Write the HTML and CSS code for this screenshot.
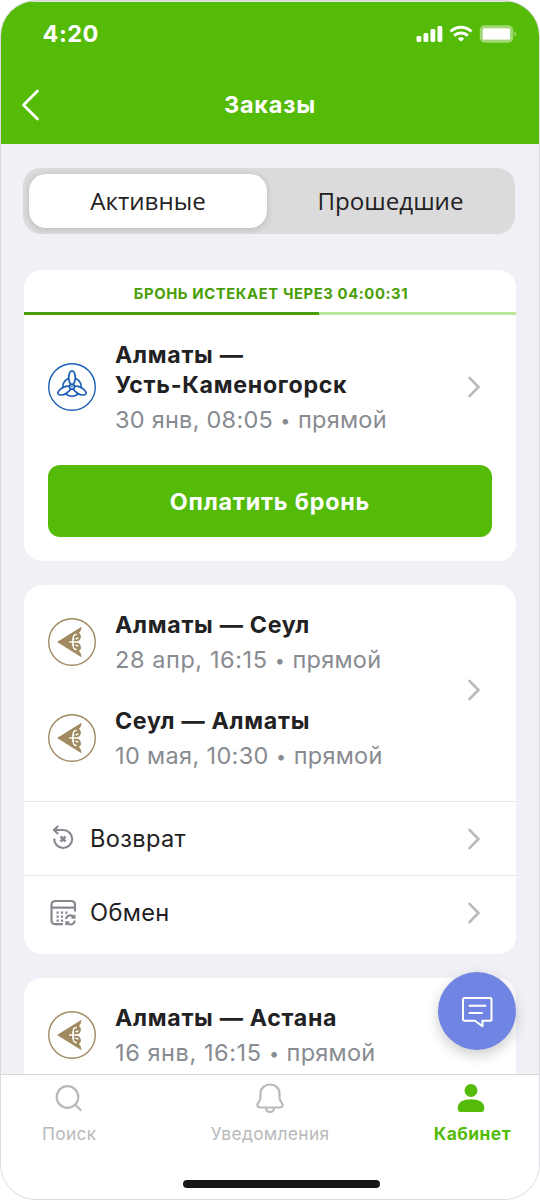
FILE: index.html
```html
<!DOCTYPE html>
<html lang="ru">
<head>
<meta charset="utf-8">
<title>Заказы</title>
<link rel="stylesheet" href="styles.css">
</head>
<body>
<svg width="0" height="0" class="defs" aria-hidden="true">
  <symbol id="chevron" viewBox="0 0 14 24"><path d="M2.500 2.800 11.500 12l-9 9.200" fill="none" stroke="#b9b9b9" stroke-width="2.600" stroke-linecap="round" stroke-linejoin="miter"/></symbol>
  <symbol id="airline-gold" viewBox="0 0 48 48">
    <circle cx="24" cy="24" r="23.300" fill="#fff" stroke="#a08a62" stroke-width="1.400"/>
    <path d="M9 24 33.500 8.800c-.2 3-1 4.800-2.600 6.200 1.800 1 2.400 3 1.800 5-.7 2.200-2.300 3.300-4.400 4 2.100.7 3.700 1.800 4.400 4 .6 2 0 4-1.800 5 1.600 1.400 2.400 3.200 2.600 6.200z" fill="#a08a62"/>
    <path d="M21.200 24h11M24.800 20.500v7M26 22c-2-3 .2-6 2.800-5.400M26 26c-2 3 .2 6 2.800 5.400M27.800 19.800c.2 1.400 2.200 1.200 2-.5M27.800 28.200c.2-1.400 2.200-1.200 2 .5" fill="none" stroke="#fff" stroke-width="1.400"/>
  </symbol>
</svg>
<div class="phone">
  <header class="header">
    <div class="status">
      <span class="time">4:20</span>
      <svg class="status-icons" width="102" height="20" viewBox="0 0 102 20">
        <g fill="#fff">
          <rect x="1.500" y="12" width="4.800" height="6" rx="1.400"/><rect x="8.500" y="9" width="4.800" height="9" rx="1.400"/><rect x="15.500" y="5" width="4.800" height="13" rx="1.400"/><rect x="22.500" y="2" width="4.800" height="16" rx="1.400"/>
          <path d="m46 17.800-3.200-3.300c1.900-1.600 4.500-1.600 6.400 0z"/>
          <rect x="67.700" y="4.300" width="27.500" height="11.400" rx="1.500"/>
        </g>
        <g fill="none" stroke="#fff" stroke-width="3"><path d="M35.500 7.500c5.900-5.700 15.100-5.700 21 0M39.200 11.800c3.800-3.700 9.800-3.700 13.600 0"/></g>
        <rect x="66.300" y="2.800" width="30.400" height="14.400" rx="3.500" fill="none" stroke="#fff" stroke-opacity=".45" stroke-width="3"/>
        <path d="M99.500 7.500c2 .8 2 4.200 0 5z" fill="#fff" opacity=".5"/>
      </svg>
    </div>
    <div class="nav">
      <svg class="back" width="20" height="34" viewBox="0 0 20 34"><path d="M17.500 3 3.500 17l14 14" fill="none" stroke="#fff" stroke-width="2.800" stroke-linecap="round" stroke-linejoin="round"/></svg>
      <h1 class="heading">Заказы</h1>
    </div>
  </header>

  <main class="content">
    <div class="tabs">
      <div class="tab tab-active"><span>Активные</span></div>
      <div class="tab"><span>Прошедшие</span></div>
    </div>

    <section class="card booking">
      <div class="expiry">БРОНЬ ИСТЕКАЕТ ЧЕРЕЗ 04:00:31</div>
      <div class="progress"><div class="progress-fill" style="width:60%"></div></div>
      <div class="row booking-row">
        <svg class="logo" viewBox="0 0 48 48">
          <circle cx="24" cy="24" r="23.300" fill="#fff" stroke="#1a5fb4" stroke-width="1.400"/>
          <g fill="#fff" stroke="#1a5fb4" stroke-width="1.700">
            <circle cx="24" cy="24" r="9.300"/>
            <path id="blade" d="M24 23c-4-3.800-4.200-10.500-1.900-14 1-1.500 2.800-1.500 3.800 0 2.300 3.500 2.100 10.200-1.900 14z"/>
            <use href="#blade" transform="rotate(118 24 23.500)"/>
            <use href="#blade" transform="rotate(-118 24 23.500)"/>
            <circle cx="24" cy="23.800" r="2.500"/>
          </g>
          <circle cx="24" cy="23.800" r=".8" fill="#1a5fb4"/>
        </svg>
        <div class="info">
          <div class="route">Алматы —<br>Усть-Каменогорск</div>
          <div class="when"><span>30 янв, 08:05</span><span class="dot">•</span>прямой</div>
        </div>
        <svg class="chevron"><use href="#chevron"/></svg>
      </div>
      <button class="pay">Оплатить бронь</button>
    </section>

    <section class="card trip">
      <div class="legs">
        <div class="leg-list">
          <div class="row">
            <svg class="logo"><use href="#airline-gold"/></svg>
            <div class="info"><div class="route">Алматы — Сеул</div><div class="when"><span class="date-wide">28 апр, 16:15</span><span class="dot">•</span>прямой</div></div>
          </div>
          <div class="row">
            <svg class="logo"><use href="#airline-gold"/></svg>
            <div class="info"><div class="route">Сеул — Алматы</div><div class="when"><span class="date-mid">10 мая, 10:30</span><span class="dot">•</span>прямой</div></div>
          </div>
        </div>
        <svg class="chevron"><use href="#chevron"/></svg>
      </div>
      <div class="action">
        <svg class="action-icon" width="30" height="30" viewBox="0 0 30 30" fill="none" stroke="#85898f" stroke-width="2.200">
          <path d="M6.200 14.500a9 9 0 1 0 9-8.500H6.500"/><path d="M10.200 2 6 6l4.200 4" stroke-linejoin="round"/><path d="m12.500 12.500 5 5m0-5-5 5" stroke-width="2.500"/>
        </svg>
        <span>Возврат</span>
        <svg class="chevron"><use href="#chevron"/></svg>
      </div>
      <div class="action">
        <svg class="action-icon" width="30" height="30" viewBox="0 0 30 30" fill="none" stroke="#85898f" stroke-width="2.200">
          <path d="M15 26.200H7.500c-2.500 0-4-1.500-4-4V7c0-2.500 1.500-4 4-4H23c2.500 0 4 1.500 4 4v6.500M3.500 9.700H27"/>
          <path d="M8.500 14.600h11M8.500 18.600h7M8.500 22.600h7" stroke-width="2.300" stroke-dasharray="2.200 2.200"/>
          <path d="M18 21.200c.5-4 5.500-5 7.500-2.200m1-2.300v3h-3M26.800 22.700c-.5 4-5.500 5-7.500 2.200m-1 2.300v-3h3" stroke-width="2"/>
        </svg>
        <span>Обмен</span>
        <svg class="chevron"><use href="#chevron"/></svg>
      </div>
    </section>

    <section class="card trip">
      <div class="legs">
        <div class="row">
          <svg class="logo"><use href="#airline-gold"/></svg>
          <div class="info"><div class="route">Алматы — Астана</div><div class="when"><span class="date-wide">16 янв, 16:15</span><span class="dot">•</span>прямой</div></div>
        </div>
      </div>
    </section>
  </main>

  <button class="chat" aria-label="Чат">
    <svg width="34" height="34" viewBox="0 -1 34 34" fill="none" stroke="#fff" stroke-width="2" stroke-linejoin="round" stroke-linecap="round"><path d="M4.500 3H30c.8 0 1.500.7 1.500 1.500v19.700c0 .8-.7 1.500-1.500 1.500h-7.500v5.500L15 25.700H4.500c-.8 0-1.500-.7-1.500-1.500V4.500C3 3.700 3.700 3 4.500 3z"/><path d="M9.500 10.700h16M9.500 18h12.500"/></svg>
  </button>

  <footer class="footer">
    <div class="footer-tabs">
      <div class="footer-tab">
        <svg width="32" height="32" viewBox="0 0 32 32" fill="none" stroke="#b9b9b9" stroke-width="2.200"><circle cx="14.500" cy="15" r="10.800"/><path d="m22 22.500 6.300 6.300"/></svg>
        <span>Поиск</span>
      </div>
      <div class="footer-tab">
        <svg width="32" height="32" viewBox="0 0 32 32" fill="none" stroke="#b9b9b9" stroke-width="2.200"><path d="M6 25.500h20c2.800 0 3.400-3 1.700-4.800-1.800-2-2.200-3.500-2.200-5.700v-3.200C25.500 6.300 21.500 2.500 16 2.500s-9.500 3.800-9.500 9.300V15c0 2.200-.4 3.700-2.200 5.700C2.600 22.500 3.200 25.500 6 25.500zM11.800 26c.5 5.300 7.900 5.300 8.400 0"/></svg>
        <span>Уведомления</span>
      </div>
      <div class="footer-tab footer-tab-active">
        <svg width="32" height="32" viewBox="0 0 32 32" fill="#55bb09"><circle cx="15" cy="8.500" r="6.500"/><path d="M1.800 27v-1.500c0-5.500 5.700-8.300 13.200-8.300s13.200 2.800 13.200 8.300V27c0 2-1 3-2.800 3H4.600c-1.800 0-2.800-1-2.800-3z"/></svg>
        <span>Кабинет</span>
      </div>
    </div>
    <div class="home-bar"></div>
  </footer>
</div>
</body>
</html>
```
FILE: styles.css
```css
* { box-sizing: border-box; }
body { margin: 0; background: #fff; font-family: Inter, "Liberation Sans", sans-serif; color: #1f2123; }
.defs { display: block; position: absolute; }
button { border: 0; padding: 0; font: inherit; }
.phone { position: relative; width: 540px; height: 1200px; display: flex; flex-direction: column; overflow: hidden; border: 1px solid #d9d9de; border-radius: 36px; background: #f0f1f7; }
.header { height: 143px; flex: none; background: #55bb09; color: #fff; border-top: 1px solid #dfe8dc; }
.status { height: 63px; display: flex; justify-content: space-between; align-items: center; padding: 0 22px 0 41.5px; }
.time { font-size: 23.5px; font-weight: 700; letter-spacing: .5px; }
.status-icons { width: 102px; }
.nav { height: 79px; display: grid; grid-template-columns: 20px 1fr 20px; align-items: center; padding: 0 19px; }
.heading { margin: 0; font-size: 23.5px; font-weight: 700; letter-spacing: .8px; text-align: center; }
.content { flex: 1; min-height: 0; overflow: hidden; padding: 24px 23px 0; }
.tabs { display: grid; grid-template-columns: 238px 1fr; height: 66px; padding: 6px; margin: 0 1px 36px -1px; background: #dbdbdb; border-radius: 18px; }
.tab { display: flex; align-items: center; justify-content: center; font: 24.1px "Open Sans", "Noto Sans", sans-serif; padding: 0 0 2px; }
.tab + .tab { padding-left: 5px; }
.tab-active { background: #fff; border-radius: 17px; box-shadow: 0 1px 6px rgba(0, 0, 0, .17); }
.card { background: #fff; border-radius: 18px; overflow: hidden; margin-bottom: 24px; }
.booking { height: 291px; }
.expiry { height: 42px; padding: 5px 0 0 2px; display: flex; align-items: center; justify-content: center; color: #489e05; font-size: 14.800px; font-weight: 700; letter-spacing: .6px; }
.progress { height: 3px; background: #bbe69c; }
.progress-fill { height: 3px; background: #489e05; }
.row { display: flex; align-items: center; }
.logo { width: 48px; height: 48px; flex: none; margin-right: 19px; }
.info { flex: 1; margin: 1px 0 -1px; white-space: nowrap; }
.route { font-size: 23.2px; line-height: 30px; font-weight: 700; letter-spacing: .7px; }
.when { margin-top: 4px; font-size: 23.5px; line-height: 32px; color: #888b91; letter-spacing: .25px; }
.date-wide { letter-spacing: .58px; }
.date-mid { letter-spacing: .35px; }
.dot { display: inline-block; width: 25px; text-align: center; font-size: 18px; line-height: 20px; vertical-align: 1px; }
.chevron { width: 14px; height: 24px; flex: none; }
.booking-row { padding: 24px 35px 30px 24px; }
.pay { display: block; width: 444px; height: 72px; margin: 0 24px; border-radius: 12px; background: #55bb09; color: #fff; font-size: 23.3px; font-weight: 700; letter-spacing: .8px; padding-top: 1px; }
.legs { display: flex; align-items: center; padding: 24px 35px 30px 24px; }
.leg-list { flex: 1; display: grid; gap: 30px; }
.action { height: 74px; display: flex; align-items: center; border-top: 1px solid #e9e9ec; padding: 0 35px 0 24px; font-size: 23.6px; letter-spacing: .35px; }
.action:last-child { height: 79px; padding-bottom: 5px; }
.action-icon { margin-right: 12px; }
.action span { flex: 1; }
.chat { position: absolute; left: 437px; top: 971px; width: 78px; height: 78px; border-radius: 50%; background: #7085e3; display: grid; place-items: center; box-shadow: 0 5px 14px rgba(0, 0, 0, .2); }
.footer { height: 125px; flex: none; background: #fff; border-top: 1px solid #d8d8da; display: flex; flex-direction: column; align-items: center; }
.footer-tabs { width: 100%; height: 108px; padding: 7px 28px 0 41px; display: flex; justify-content: space-between; }
.footer-tab { height: 63px; display: flex; flex-direction: column; align-items: center; gap: 9px; color: #b9b9b9; font-size: 17.4px; line-height: 22px; letter-spacing: .3px; }
.footer-tab:nth-child(2) { margin-left: 10px; }
.footer-tab-active { color: #55bb09; font-weight: 700; letter-spacing: .45px; }
.home-bar { width: 197px; height: 8px; border-radius: 4px; background: #171717; margin: -3px 0 0 22px; }
```
